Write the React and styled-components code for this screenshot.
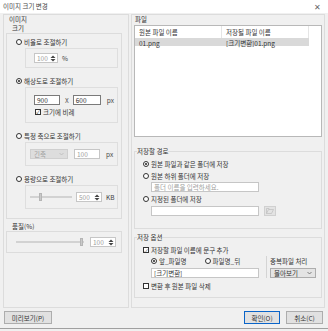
import React from 'react';
import styled, { createGlobalStyle } from 'styled-components';

const Global = createGlobalStyle`
  html, body { margin: 0; padding: 0; background: #f0f0f0; }
  body {
    font-family: "Noto Sans CJK KR", "Noto Sans", sans-serif;
    font-size: 6.5px;
    color: #333;
  }
  * { box-sizing: border-box; }
`;

const Window = styled.div`
  width: 328px;
  height: 329px;
  display: flex;
  flex-direction: column;
  background: #f0f0f0;
  border-bottom: 1px solid #a0a0a0;
`;

const TitleBar = styled.div`
  height: 13px;
  background: #fff;
  display: flex;
  align-items: center;
  justify-content: space-between;
  padding: 0 7px 0 3px;
  color: #444;
  line-height: 1;
`;

const Close = styled.span`
  font-size: 8px;
  color: #666;
`;

const Main = styled.div`
  display: flex;
  gap: 2px;
  padding: 1px 3px 0 3px;
  height: 295px;
`;

const LeftPanel = styled.div`
  width: 126px;
  border: 1px solid #dcdcdc;
  display: flex;
  flex-direction: column;
  padding: 0 6px 0 2px;
`;

const RightPanel = styled.div`
  flex: 1;
  border: 1px solid #dcdcdc;
  display: flex;
  flex-direction: column;
  padding: 0 2px 0 1px;
`;

const Label = styled.div`
  height: 9px;
  line-height: 9px;
  padding-left: ${p => p.$indent || 0}px;
  white-space: nowrap;
`;

const Box = styled.div`
  border: 1px solid #dcdcdc;
  display: flex;
  flex-direction: column;
  height: ${p => p.$h}px;
  padding: ${p => p.$pad || '0'};
  gap: ${p => p.$gap || 0}px;
`;

const OptionGroup = styled.div`
  display: flex;
  flex-direction: column;
  gap: 1px;
`;

const OptionBody = styled.div`
  margin-left: 9px;
  height: ${p => p.$h}px;
  border: 1px solid #dedede;
  display: flex;
  flex-direction: column;
  justify-content: center;
  gap: 3px;
  padding-left: ${p => p.$pl ?? 8}px;
`;

const Row = styled.div`
  display: flex;
  align-items: center;
  height: ${p => p.$h || 10}px;
  gap: ${p => p.$gap || 0}px;
  padding-left: ${p => p.$pl || 0}px;
  white-space: nowrap;
`;

const RadioCircle = styled.span`
  width: 6px;
  height: 6px;
  border-radius: 50%;
  border: 1px solid #333;
  background: #fff;
  display: inline-flex;
  align-items: center;
  justify-content: center;
  margin-right: 2px;
  flex: none;
  &::after {
    content: '';
    width: 2px;
    height: 2px;
    border-radius: 50%;
    background: ${p => (p.$on ? '#222' : 'transparent')};
  }
`;

const CheckBox = styled.span`
  width: 6px;
  height: 6px;
  border: 1px solid #333;
  background: #fff;
  display: inline-flex;
  align-items: center;
  justify-content: center;
  margin-right: 2px;
  flex: none;
  font-size: 5px;
  line-height: 1;
`;

const Input = styled.div`
  width: ${p => p.$w}px;
  height: 10px;
  background: #fff;
  border: 1px solid ${p => (p.$active ? '#7a7a7a' : '#c6c6c6')};
  color: ${p => (p.$dim ? '#a0a0a0' : '#333')};
  display: flex;
  align-items: center;
  justify-content: space-between;
  padding: 0 1px 0 2px;
  white-space: nowrap;
  overflow: hidden;
  flex: none;
`;

const SelectBox = styled.div`
  width: ${p => p.$w}px;
  height: 10px;
  background: ${p => (p.$disabled ? '#dddddd' : '#e4e4e4')};
  border: 1px solid ${p => (p.$disabled ? '#cfcfcf' : '#adadad')};
  color: ${p => (p.$disabled ? '#a0a0a0' : '#333')};
  display: flex;
  align-items: center;
  justify-content: space-between;
  padding: 0 3px 0 3px;
  flex: none;
`;

const Unit = styled.span`
  color: ${p => (p.$dim ? '#8a8a8a' : '#444')};
  margin-left: ${p => p.$ml || 0}px;
`;

const Times = styled.span`
  margin: 0 4px 0 5px;
  color: #555;
`;

const SliderTrack = styled.div`
  position: relative;
  width: ${p => p.$w}px;
  height: 2px;
  background: #dcdcdc;
  border: 1px solid #d2d2d2;
  flex: none;
`;

const SliderThumb = styled.span`
  position: absolute;
  top: -4px;
  width: 3px;
  height: 8px;
  background: #c9c9c9;
  border: 1px solid #b5b5b5;
`;

const ListBox = styled.div`
  height: 112px;
  margin: 1px 0 0 1px;
  background: #fff;
  border: 1px solid #b8b8b8;
  display: flex;
  flex-direction: column;
`;

const ListRow = styled.div`
  display: grid;
  grid-template-columns: 87px 87px;
  height: ${p => p.$h}px;
  align-items: center;
  background: ${p => (p.$selected ? '#d9d9d9' : 'transparent')};
  width: 174px;
`;

const ListCell = styled.div`
  padding-left: 4px;
  height: 100%;
  display: flex;
  align-items: center;
  border-right: ${p => (p.$header ? '1px solid #e5e5e5' : 'none')};
  white-space: nowrap;
`;

const Fieldset = styled.fieldset`
  margin: ${p => p.$mt || 0}px 0 0 1px;
  padding: 0 0 0 8px;
  border: 1px solid #dcdcdc;
  height: ${p => p.$h}px;
  display: flex;
  flex-direction: column;
  min-width: 0;
`;

const Legend = styled.legend`
  padding: 0;
  margin-left: -6px;
  line-height: 8px;
  height: 8px;
`;

const SubRow = styled.div`
  display: flex;
  align-items: center;
  gap: ${p => p.$gap || 0}px;
  padding-left: ${p => p.$pl || 0}px;
  height: ${p => p.$h || 10}px;
  white-space: nowrap;
`;

const Separator = styled.div`
  width: 1px;
  align-self: stretch;
  background: #d4d4d4;
  margin: 0 3px 0 7px;
`;

const OptCols = styled.div`
  display: flex;
`;

const OptCol = styled.div`
  display: flex;
  flex-direction: column;
  gap: 2px;
`;

const IconButton = styled.div`
  width: 12px;
  height: 10px;
  background: #e3e3e3;
  border: 1px solid #d0d0d0;
  display: flex;
  align-items: center;
  justify-content: center;
  flex: none;
`;

const Footer = styled.div`
  display: flex;
  align-items: center;
  justify-content: space-between;
  padding: 3px 5px 0 4px;
`;

const Button = styled.div`
  height: 13px;
  width: ${p => p.$w}px;
  background: #e1e1e1;
  border: 1px solid ${p => (p.$default ? '#0a64c8' : '#adadad')};
  display: flex;
  align-items: center;
  justify-content: center;
  color: #333;
  white-space: nowrap;
`;

const ButtonGroup = styled.div`
  display: flex;
  gap: 6px;
`;

const Spacer = styled.span`
  width: ${p => p.$w}px;
  flex: none;
`;

const Dim = styled.span`
  color: ${p => (p.$dim ? '#999' : 'inherit')};
`;

const Spin = () => (
  <svg width="6" height="7" viewBox="0 0 6 7">
    <path d="M3 0.5 L5.5 3 L0.5 3 Z" fill="#444" />
    <path d="M3 6.5 L5.5 4 L0.5 4 Z" fill="#444" />
  </svg>
);

const Chevron = ({ color = '#666' }) => (
  <svg width="5" height="4" viewBox="0 0 5 4">
    <path d="M0.5 1 L2.5 3 L4.5 1" fill="none" stroke={color} strokeWidth="0.8" />
  </svg>
);

const Folder = () => (
  <svg width="8" height="6" viewBox="0 0 8 6">
    <path d="M0.5 5.5 L2.5 1.5 L7.5 1.5 L5.5 5.5 Z M0.5 5.5 L0.5 0.5 L3 0.5 L3.5 1.5" fill="none" stroke="#bdbdbd" strokeWidth="0.7" />
  </svg>
);

const Radio = ({ on, children, dim }) => (
  <>
    <RadioCircle $on={on} />
    <Dim $dim={dim}>{children}</Dim>
  </>
);

export default function App() {
  return (
    <Window>
      <Global />
      <TitleBar>
        <span>이미지 크기 변경</span>
        <Close>✕</Close>
      </TitleBar>
      <Main>
        <LeftPanel>
          <Label $indent={3}>이미지</Label>
          <Label $indent={6}>크기</Label>
          <Box $h={186} $pad="3px 3px 0 9px" $gap={8}>
            <OptionGroup>
              <Row><Radio>비율로 조절하기</Radio></Row>
              <OptionBody $h={20}>
                <Row $gap={4}>
                  <Input $w={24} $dim>100<Spin /></Input>
                  <Unit>%</Unit>
                </Row>
              </OptionBody>
            </OptionGroup>
            <OptionGroup>
              <Row><Radio on>해상도로 조절하기</Radio></Row>
              <OptionBody $h={36}>
                <Row>
                  <Input $w={26} $active>900</Input>
                  <Times>X</Times>
                  <Input $w={28} $active>600</Input>
                  <Unit $ml={6}>px</Unit>
                </Row>
                <Row $h={8} $pl={1}>
                  <CheckBox>✓</CheckBox>크기에 비례
                </Row>
              </OptionBody>
            </OptionGroup>
            <OptionGroup>
              <Row><Radio>특정 축으로 조절하기</Radio></Row>
              <OptionBody $h={24} $pl={4}>
                <Row $gap={6}>
                  <SelectBox $w={38} $disabled>긴축<Chevron color="#bbb" /></SelectBox>
                  <Input $w={26} $dim>100</Input>
                  <Unit>px</Unit>
                </Row>
              </OptionBody>
            </OptionGroup>
            <OptionGroup>
              <Row><Radio>용량으로 조절하기</Radio></Row>
              <OptionBody $h={24} $pl={4}>
                <Row $gap={4}>
                  <SliderTrack $w={42}><SliderThumb style={{ left: 8 }} /></SliderTrack>
                  <Input $w={26} $dim>500<Spin /></Input>
                  <Unit>KB</Unit>
                </Row>
              </OptionBody>
            </OptionGroup>
          </Box>
          <Label $indent={6} style={{ marginTop: 3 }}>품질(%)</Label>
          <Box $h={22} $pad="0 0 0 9px">
            <Row $h={20} $gap={6}>
              <SliderTrack $w={68}><SliderThumb style={{ left: 63 }} /></SliderTrack>
              <Input $w={26} $dim>100<Spin /></Input>
            </Row>
          </Box>
        </LeftPanel>
        <RightPanel>
          <Label $indent={2}>파일</Label>
          <ListBox>
            <ListRow $h={12}>
              <ListCell $header>원본 파일 이름</ListCell>
              <ListCell $header>저장될 파일 이름</ListCell>
            </ListRow>
            <ListRow $h={8} $selected>
              <ListCell>01.png</ListCell>
              <ListCell>[크기변환]01.png</ListCell>
            </ListRow>
          </ListBox>
          <Fieldset $mt={10} $h={82}>
            <Legend>저장할 경로</Legend>
            <SubRow $h={12} style={{ marginTop: 3 }}><Radio on>원본 파일과 같은 폴더에 저장</Radio></SubRow>
            <SubRow $h={12}><Radio>원본 하위 폴더에 저장</Radio></SubRow>
            <SubRow $h={10} $pl={8}>
              <Input $w={108} $dim>폴더 이름을 입력하세요.</Input>
            </SubRow>
            <SubRow $h={14}><Radio>지정된 폴더에 저장</Radio></SubRow>
            <SubRow $h={10} $pl={8} $gap={5}>
              <Input $w={108} />
              <IconButton><Folder /></IconButton>
            </SubRow>
          </Fieldset>
          <Fieldset $mt={4} $h={65}>
            <Legend>저장 옵션</Legend>
            <SubRow $h={12} style={{ marginTop: 3 }}>
              <CheckBox>✓</CheckBox>저장할 파일 이름에 문구 추가
            </SubRow>
            <OptCols>
              <OptCol>
                <SubRow $pl={8} $h={10}>
                  <Radio on>앞_파일명</Radio>
                  <Spacer $w={18} />
                  <Radio>파일명_뒤</Radio>
                </SubRow>
                <SubRow $pl={8} $h={10}>
                  <Input $w={108}>[크기변환]</Input>
                </SubRow>
              </OptCol>
              <Separator />
              <OptCol>
                <SubRow $h={10}>중복파일 처리</SubRow>
                <SubRow $h={10}>
                  <SelectBox $w={46}>몰아보기<Chevron /></SelectBox>
                </SubRow>
              </OptCol>
            </OptCols>
            <SubRow $h={12} style={{ marginTop: 2 }}>
              <CheckBox />변환 후 원본 파일 삭제
            </SubRow>
          </Fieldset>
        </RightPanel>
      </Main>
      <Footer>
        <Button $w={48}>미리보기(P)</Button>
        <ButtonGroup>
          <Button $w={36} $default>확인(O)</Button>
          <Button $w={37}>취소(C)</Button>
        </ButtonGroup>
      </Footer>
    </Window>
  );
}
